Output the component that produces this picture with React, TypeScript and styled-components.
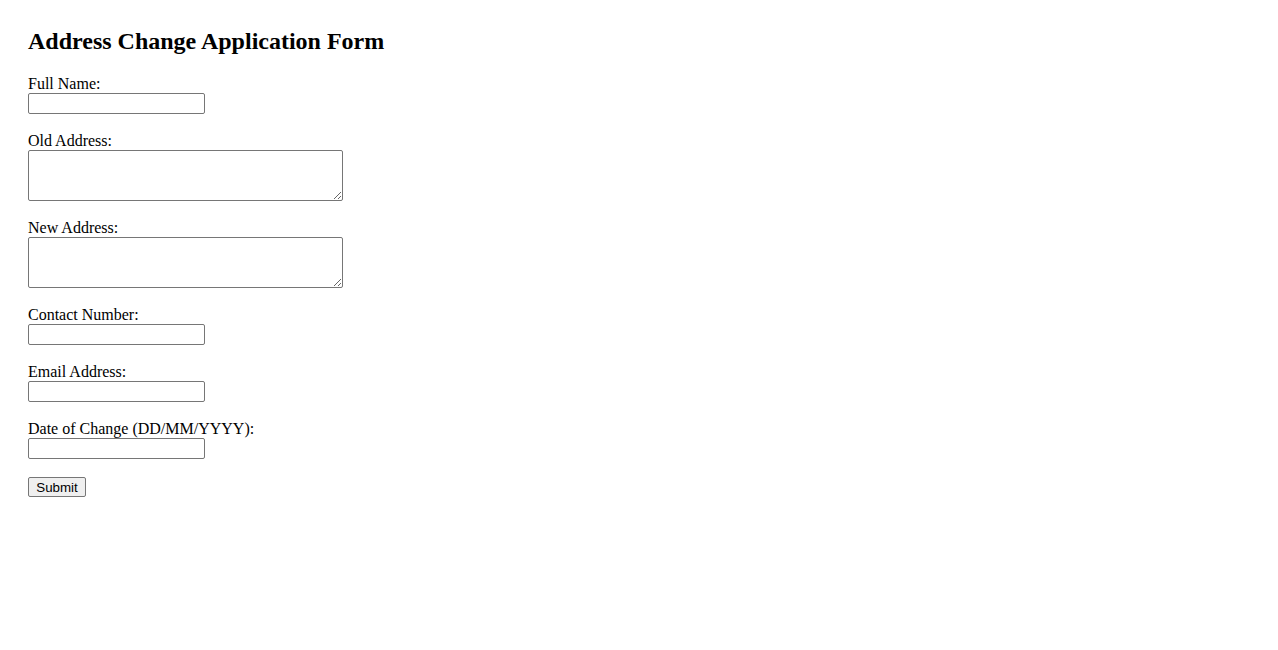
import React from "react";
import styled, { createGlobalStyle } from "styled-components";

const GlobalStyle = createGlobalStyle`
  html, body {
    margin: 0;
    padding: 0;
    background: #ffffff;
  }
  body {
    font-family: "Liberation Serif", "Times New Roman", serif;
    font-size: 16px;
    color: #000000;
  }
`;

const Page = styled.div`
  padding: 27px 28px 28px 28px;
`;

const Title = styled.h2`
  margin: 0 0 20px 0;
  font-size: 24px;
  line-height: 28px;
  font-weight: bold;
`;

const Form = styled.form`
  display: flex;
  flex-direction: column;
  align-items: flex-start;
  gap: 18px;
`;

const Field = styled.div`
  display: flex;
  flex-direction: column;
  align-items: flex-start;
`;

const Label = styled.label`
  display: block;
  line-height: 18px;
  height: 18px;
`;

const TextInput = styled.input`
  box-sizing: border-box;
  width: 177px;
  height: 21px;
  margin: 0;
  padding: 1px 2px;
  border: 1px solid #767676;
  border-radius: 2px;
  background: #ffffff;
  font-family: "Liberation Sans", Arial, sans-serif;
  font-size: 13.33px;
`;

const TextArea = styled.textarea`
  box-sizing: border-box;
  width: 315px;
  height: 51px;
  margin: 0;
  padding: 2px;
  border: 1px solid #767676;
  border-radius: 2px;
  background: #ffffff;
  font-family: "Liberation Mono", monospace;
  font-size: 13.33px;
  display: block;
`;

const SubmitButton = styled.button`
  box-sizing: border-box;
  width: 58px;
  height: 20px;
  margin: 0;
  padding: 1px 6px 0 6px;
  border: 1px solid #767676;
  border-radius: 2px;
  background: #efefef;
  color: #000000;
  font-family: "Liberation Sans", Arial, sans-serif;
  font-size: 13.33px;
  line-height: 16px;
`;

type FieldDef = { id: string; label: string; multiline?: boolean; type?: string };

const fields: FieldDef[] = [
  { id: "fullName", label: "Full Name:" },
  { id: "oldAddress", label: "Old Address:", multiline: true },
  { id: "newAddress", label: "New Address:", multiline: true },
  { id: "contact", label: "Contact Number:", type: "tel" },
  { id: "email", label: "Email Address:", type: "email" },
  { id: "date", label: "Date of Change (DD/MM/YYYY):" },
];

export default function App() {
  return (
    <>
      <GlobalStyle />
      <Page>
        <Title>Address Change Application Form</Title>
        <Form onSubmit={(e) => e.preventDefault()}>
          {fields.map((f) => (
            <Field key={f.id}>
              <Label htmlFor={f.id}>{f.label}</Label>
              {f.multiline ? (
                <TextArea id={f.id} name={f.id} />
              ) : (
                <TextInput id={f.id} name={f.id} type={f.type ?? "text"} />
              )}
            </Field>
          ))}
          <SubmitButton type="submit">Submit</SubmitButton>
        </Form>
      </Page>
    </>
  );
}
